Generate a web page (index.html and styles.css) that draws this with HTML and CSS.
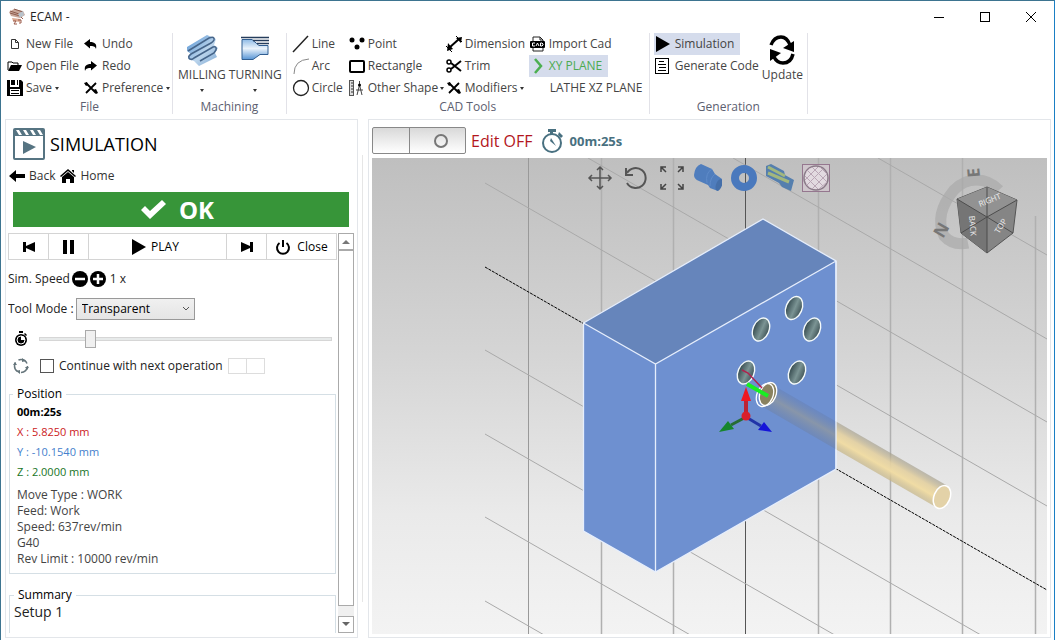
FILE: index.html
```html
<!DOCTYPE html>
<html lang="en">
<head>
<meta charset="utf-8">
<title>ECAM</title>
<link rel="stylesheet" href="styles.css">
</head>
<body>
<div class="window">
  <header class="titlebar">
    <svg class="app-icon" width="18" height="18" viewBox="0 0 18 18"><path d="M1 4l5-3 9 2 2 4-5 3-9-2z" fill="#c9a799"/><path d="M2 3l9 3M2 5l10 3M6 1l9 3" stroke="#8c5a4c" stroke-width="1"/><path d="M10 6l5-3 1 4-4 3z" fill="#b9c3cc"/><path d="M4 10l9 1-1 3-7-1z" fill="#dcaa93"/><path d="M5 13l3 0-2 3h3M10 12l3 0v3h-2M13 9l2 2" fill="none" stroke="#9a5b4a"/></svg>
    <h1 class="app-title">ECAM -</h1>
    <div class="window-controls">
      <button class="win-btn" aria-label="Minimize"><svg width="12" height="12" viewBox="0 0 12 12"><path d="M1 6.500h10" stroke="#000"/></svg></button>
      <button class="win-btn" aria-label="Maximize"><svg width="12" height="12" viewBox="0 0 12 12"><rect x="1.500" y="1.500" width="9" height="9" fill="none" stroke="#000"/></svg></button>
      <button class="win-btn" aria-label="Close window"><svg width="12" height="12" viewBox="0 0 12 12"><path d="M1 1l10 10M11 1L1 11" stroke="#000"/></svg></button>
    </div>
  </header>

  <nav class="ribbon">
    <section class="group">
      <div class="cols file-cols">
        <button class="cmd"><svg width="16" height="16" viewBox="0 0 16 16"><path d="M4.500 3.500h4l3 3v6h-7zM8.500 3.500v3h3" fill="none" stroke="#333"/></svg>New File</button>
        <button class="cmd"><svg width="16" height="16" viewBox="0 0 16 16"><path d="M1 7.500L7 3v3c5 0 7 2 6 7-1-3-3-3-6-3v2.500z"/></svg>Undo</button>
        <button class="cmd"><svg width="16" height="16" viewBox="0 0 16 16"><path d="M1 12V4h4l1 1h5v2" fill="none" stroke="#000"/><path d="M1 13l3-6h11l-3 6z"/></svg>Open File</button>
        <button class="cmd"><svg width="16" height="16" viewBox="0 0 16 16"><path d="M14 7.500L8 3v3c-5 0-7 2-6 7 1-3 3-3 6-3v2.500z"/></svg>Redo</button>
        <button class="cmd"><svg width="16" height="16" viewBox="0 0 16 16"><path d="M0 0h3v7h9V0h2l2 2v14H0zM4 0h4v5H4zM10 0h1v5h-1z"/><path d="M8 0h2v5H8z" fill="#fff"/><path d="M3 9h10v6H3z" fill="#fff"/><path d="M4 10.500h8M4 13.500h8" stroke="#000"/></svg>Save<i class="caret"></i></button>
        <button class="cmd"><svg width="16" height="16" viewBox="0 0 16 16"><path d="M3 3l10 10M13 3L3 13" stroke="#000" stroke-width="1.800"/><path d="M1 3l3-1 1 3-2 1zM10 10l3-1 2 4-2 1z"/></svg>Preference<i class="caret"></i></button>
      </div>
      <h2 class="group-name">File</h2>
    </section>

    <section class="group">
      <div class="big-row">
        <button class="big"><svg width="34" height="34" viewBox="0 0 34 34"><defs><linearGradient id="steel" x1="0" y1="0" x2="1" y2="1"><stop offset="0" stop-color="#4c8dd0"/><stop offset=".55" stop-color="#bcd5ec"/><stop offset="1" stop-color="#7ba6d2"/></linearGradient></defs><path d="M2 14L22 2l9 4-2 6 4 3-3 5 2 4-18 9-5-5-6-2 3-5-4-3z" fill="url(#steel)"/><path d="M3 18L24 5q6-2 5 2-1 2-3 3L6 21q-4 3-1 5 2 1 4-1L28 14q4-1 3 3l-2 3L15 28" fill="none" stroke="#46658a" stroke-width="1.600"/></svg>MILLING<i class="caret"></i></button>
        <button class="big"><svg width="30" height="34" viewBox="0 0 30 34"><defs><linearGradient id="turned" x1="0" y1="0" x2="0" y2="1"><stop offset="0" stop-color="#8fbbe6"/><stop offset=".45" stop-color="#eaf3fb"/><stop offset="1" stop-color="#5795d5"/></linearGradient></defs><path d="M2 6.500h10l7 6h9v9h-8l-7 5H2z" fill="url(#turned)" stroke="#315e91"/><path d="M1 4.500h28M13 7.500h16M17 10.500h12" stroke="#263d5c" stroke-width="1.500"/></svg>TURNING<i class="caret"></i></button>
      </div>
      <h2 class="group-name">Machining</h2>
    </section>

    <section class="group">
      <div class="cols cad-cols">
        <button class="cmd"><svg width="18" height="18" viewBox="0 0 18 18"><path d="M1 17L16 1" stroke="#222" stroke-width="1.500"/></svg>Line</button>
        <button class="cmd"><svg width="18" height="18" viewBox="0 0 18 18"><circle cx="4" cy="5" r="2.500"/><circle cx="14" cy="5" r="2.500"/><circle cx="9" cy="12" r="2.500"/></svg>Point</button>
        <button class="cmd"><svg width="18" height="18" viewBox="0 0 18 18"><path d="M4 13L14 4" stroke="#000" stroke-width="2"/><path d="M3 8l5 6-6 2zM11 3l5 5 1-6z"/><path d="M1 11l6 6M11 1l6 6" stroke="#000"/></svg>Dimension</button>
        <button class="cmd"><svg width="18" height="18" viewBox="0 0 18 18"><path d="M4 7V2h7l3 3v11H4v-3" fill="none" stroke="#222"/><path d="M11 2v3h3" fill="none" stroke="#222"/><rect x="1" y="6" width="15" height="7" rx="1"/><path d="M6 8H3.500v3H6M7 11l1.500-3 1.500 3M11.500 8v3h1.500l1-1V9l-1-1z" fill="none" stroke="#fff"/></svg>Import Cad</button>
        <button class="cmd"><svg width="18" height="18" viewBox="0 0 18 18"><path d="M2 17Q2 3 17 2" fill="none" stroke="#888"/></svg>Arc</button>
        <button class="cmd"><svg width="18" height="18" viewBox="0 0 18 18"><rect x="2" y="4" width="14" height="11" rx="1" fill="none" stroke="#000" stroke-width="2"/></svg>Rectangle</button>
        <button class="cmd"><svg width="18" height="18" viewBox="0 0 18 18"><circle cx="4" cy="5" r="2" fill="none" stroke="#000" stroke-width="1.500"/><circle cx="4" cy="13" r="2" fill="none" stroke="#000" stroke-width="1.500"/><path d="M6 6l10 8M6 12l10-8" stroke="#000" stroke-width="2"/></svg>Trim</button>
        <button class="cmd active plane"><svg width="18" height="18" viewBox="0 0 18 18"><path d="M6 2l6 7-6 7" fill="none" stroke="#4caf50" stroke-width="2.500"/></svg>XY PLANE</button>
        <button class="cmd"><svg width="18" height="18" viewBox="0 0 18 18"><circle cx="9" cy="9" r="7.500" fill="none" stroke="#222" stroke-width="1.300"/></svg>Circle</button>
        <button class="cmd"><svg width="18" height="18" viewBox="0 0 18 18"><rect x="1.500" y="1.500" width="4" height="15" fill="#ddd" stroke="#555"/><path d="M3 4h2M3 7h2M3 10h2M3 13h2" stroke="#333"/><path d="M11.500 2v4M11.500 6L9 16M11.500 6L14 16M8 11h7" fill="none" stroke="#444"/><circle cx="11.500" cy="6" r="1.500"/></svg>Other Shape<i class="caret"></i></button>
        <button class="cmd"><svg width="18" height="18" viewBox="0 0 18 18"><path d="M4 4l10 10M14 4L4 14" stroke="#000" stroke-width="1.800"/><path d="M2 4l3-1 1 3-2 1zM11 11l3-1 2 4-2 1z"/></svg>Modifiers<i class="caret"></i></button>
        <button class="cmd no-icon">LATHE XZ PLANE</button>
      </div>
      <h2 class="group-name">CAD Tools</h2>
    </section>

    <section class="group">
      <div class="gen-row">
        <div class="gen-list">
          <button class="cmd active"><svg width="18" height="18" viewBox="0 0 18 18"><path d="M2 1l14 8-14 8z"/></svg>Simulation</button>
          <button class="cmd"><svg width="18" height="18" viewBox="0 0 18 18"><rect x="1.500" y="1.500" width="13" height="15" fill="none" stroke="#000"/><path d="M5 4.500h5M4 7.500h8M5 10.500h7M4 13.500h8" stroke="#000"/></svg>Generate Code</button>
        </div>
        <button class="big"><svg width="30" height="34" viewBox="0 0 30 34"><path d="M4 12Q7 4 14 4q6 0 9 8" fill="none" stroke="#000" stroke-width="3.500"/><path d="M27 8v11l-11-4zM3 28V16l11 4z"/><path d="M26 21q-2 9-10 9-6 0-9-6" fill="none" stroke="#000" stroke-width="3.500"/></svg>Update</button>
      </div>
      <h2 class="group-name">Generation</h2>
    </section>
  </nav>

  <main class="workspace">
    <aside class="panel side">
      <div class="side-title">
        <svg width="32" height="32" viewBox="0 0 32 32"><rect x="1" y="1" width="30" height="30" rx="1" fill="#fff" stroke="#567482" stroke-width="2"/><path d="M1 1h30v7H1z" fill="#567482"/><path d="M3 2l3 5h3L6 2zM10 2l3 5h3l-3-5zM17 2l3 5h3l-3-5zM24 2l3 5h3l-3-5z" fill="#fff"/><path d="M10 13l13 6-13 7z" fill="#567482"/></svg>
        <h2>SIMULATION</h2>
      </div>
      <div class="crumbs">
        <a href="#back"><svg width="16" height="16" viewBox="0 0 16 16"><path d="M0 8l7-6v4h9v4H7v4z"/></svg>Back</a>
        <a href="#home"><svg width="16" height="16" viewBox="0 0 16 16"><path d="M0 8l8-7 8 7-1 1-7-6-7 6zM2 9l6-5 6 5v6h-4v-4H6v4H2zM12 2h2v3l-2-2z"/></svg>Home</a>
      </div>
      <button class="ok"><svg width="26" height="22" viewBox="0 0 26 22"><path d="M1 11l4-4 5 5L22 1l4 4-16 15z" fill="#fff"/></svg>OK</button>

      <div class="scroller">
        <div class="scroll-body">
          <div class="player">
            <button aria-label="Previous"><svg width="14" height="14" viewBox="0 0 14 14"><path d="M1 2h3v4l9-4v10L4 8v4H1z"/></svg></button>
            <button aria-label="Pause"><svg width="14" height="14" viewBox="0 0 14 14"><path d="M1 0h4v14H1zM8 0h4v14H8z"/></svg></button>
            <button class="play"><svg width="14" height="16" viewBox="0 0 14 16"><path d="M0 0l14 8-14 8z"/></svg>PLAY</button>
            <button aria-label="Next"><svg width="14" height="14" viewBox="0 0 14 14"><path d="M13 2h-3v4L1 2v10l9-4v4h3z"/></svg></button>
            <button class="close"><svg width="16" height="16" viewBox="0 0 16 16"><path d="M4.500 4a6 6 0 1 0 7 0" fill="none" stroke="#000" stroke-width="2"/><path d="M8 1v7" stroke="#000" stroke-width="2"/></svg>Close</button>
          </div>
          <div class="speed">
            <span>Sim. Speed</span>
            <span class="steps">
              <button aria-label="Slower"><svg width="16" height="16" viewBox="0 0 16 16"><circle cx="8" cy="8" r="8"/><path d="M3 8h10" stroke="#fff" stroke-width="2.500"/></svg></button>
              <button aria-label="Faster"><svg width="16" height="16" viewBox="0 0 16 16"><circle cx="8" cy="8" r="8"/><path d="M3 8h10M8 3v10" stroke="#fff" stroke-width="2.500"/></svg></button>
            </span>
            <span>1 x</span>
          </div>
          <div class="mode">
            <label for="tool-mode">Tool Mode :</label>
            <span class="select-box"><select id="tool-mode"><option>Transparent</option></select><svg width="8" height="6" viewBox="0 0 8 6"><path d="M1 1l3 3 3-3" fill="none" stroke="#555"/></svg></span>
          </div>
          <div class="time-row">
            <svg width="14" height="16" viewBox="0 0 14 16"><path d="M5 0h4v2H5zM11 2l2 2-1 1-2-2z"/><circle cx="7" cy="9" r="6"/><circle cx="7" cy="9" r="4" fill="none" stroke="#fff"/><path d="M7 9V5a4 4 0 0 1 4 4z" fill="#fff"/></svg>
            <input type="range" min="0" max="100" value="16" aria-label="Simulation time">
          </div>
          <div class="next-row">
            <svg width="16" height="16" viewBox="0 0 16 16"><circle cx="8" cy="8" r="6.500" fill="none" stroke="#65757b" stroke-width="1.500" stroke-dasharray="10 3.600"/><path d="M9 0l4 3-4 1zM7 16l-4-3 4-1zM0 7l2-3 2 3zM16 9l-2 3-2-3z" fill="#65757b"/></svg>
            <input type="checkbox" id="continue"><label for="continue">Continue with next operation</label>
            <span class="mini-toggle"><span></span><span></span></span>
          </div>
          <fieldset class="position">
            <legend>Position</legend>
            <div class="axes">
              <p class="time">00m:25s</p>
              <p class="x">X : 5.8250 mm</p>
              <p class="y">Y : -10.1540 mm</p>
              <p class="z">Z : 2.0000 mm</p>
            </div>
            <p>Move Type : WORK</p>
            <p>Feed: Work</p>
            <p>Speed: 637rev/min</p>
            <p>G40</p>
            <p>Rev Limit : 10000 rev/min</p>
          </fieldset>
          <fieldset class="summary">
            <legend>Summary</legend>
            <p>Setup 1</p>
          </fieldset>
        </div>
        <div class="scrollbar">
          <button aria-label="Scroll up"><svg width="8" height="5" viewBox="0 0 8 5"><path d="M0 5l4-4 4 4z" fill="#777"/></svg></button>
          <div class="thumb"></div>
          <button aria-label="Scroll down"><svg width="8" height="5" viewBox="0 0 8 5"><path d="M0 0l4 4 4-4z" fill="#666"/></svg></button>
        </div>
      </div>
    </aside>
    <div class="splitter"></div>
    <section class="panel view">
      <div class="view-bar">
        <button class="switch" aria-label="Edit mode"><span></span><span><svg width="16" height="16" viewBox="0 0 16 16"><circle cx="8" cy="8" r="6" fill="none" stroke="#777" stroke-width="2"/></svg></span></button>
        <span class="edit-state">Edit OFF</span>
        <svg width="22" height="26" viewBox="0 0 22 26"><circle cx="11" cy="15" r="9" fill="none" stroke="#487080" stroke-width="2"/><path d="M7 1h8v3H7zM9 4h3v2H9zM18 4l4 4-2 2-3-3z" fill="#487080"/><path d="M10 10l5 8-6-5z" fill="#487080"/></svg>
        <strong class="clock">00m:25s</strong>
      </div>
      <div class="stage">
        <svg class="scene" viewBox="372 158 675 476" preserveAspectRatio="xMidYMid slice">
          <defs>
            <linearGradient id="sky" x1="0" y1="0" x2="0" y2="1"><stop offset="0" stop-color="#bfbfbf"/><stop offset=".4" stop-color="#d4d4d4"/><stop offset=".75" stop-color="#eaeaea"/><stop offset="1" stop-color="#f3f3f3"/></linearGradient>
            <linearGradient id="rod" gradientUnits="userSpaceOnUse" x1="0" y1="-12" x2="0" y2="12"><stop offset="0" stop-color="#a59f8c" stop-opacity=".65"/><stop offset=".35" stop-color="#e3d0a0" stop-opacity=".9"/><stop offset=".65" stop-color="#f0dca5"/><stop offset="1" stop-color="#c5b587" stop-opacity=".7"/></linearGradient>
            <linearGradient id="rod-in" gradientUnits="userSpaceOnUse" x1="0" y1="-12" x2="0" y2="12"><stop offset="0" stop-color="#6781b4" stop-opacity=".6"/><stop offset=".5" stop-color="#8d97a3"/><stop offset="1" stop-color="#6e84ad" stop-opacity=".7"/></linearGradient>
            <linearGradient id="bore"><stop offset="0" stop-color="#34494d"/><stop offset=".55" stop-color="#7b9494"/><stop offset="1" stop-color="#405457"/></linearGradient>
          </defs>
          <rect x="372" y="158" width="675" height="476" fill="url(#sky)"/>
          <path d="M601.500 158v476M673.500 158v476M818.500 158v476M890.500 158v476M962.500 158v476M1035.500 216v418" stroke="#b0b0b0" stroke-width="1.500"/>
          <path d="M528.500 158v476" stroke="#999"/>
          <path d="M745.500 158v476" stroke="#555"/>
          <path d="M485 183l562 323M485 350l562 323M485 434l562 323M485 517l562 323M485 601l562 323M588 158l459 264M733 158l314 181M878 158l169 97" stroke="#a9a9a9" stroke-width="1"/>
          <path d="M485 267l562 323" stroke="#000" stroke-dasharray="3 1"/>
          <path d="M583.500 323L763 219l73 42v208L655.500 572l-72-41z" fill="#6e90d0"/>
          <path d="M583.500 323L763 219l73 42-180.500 103z" fill="#6685bb"/>
          <path d="M583.500 323L763 219l73 42v208L655.500 572l-72-41zM583.500 323l72 41L836 261M655.500 364v208" fill="none" stroke="#e6eefc" stroke-width="1.300"/>
          <g fill="url(#bore)" stroke="#f4fafa" stroke-width="1.400">
            <ellipse cx="761" cy="329.500" rx="8" ry="12" transform="rotate(23 761 329.500)"/>
            <ellipse cx="794" cy="308" rx="8" ry="12" transform="rotate(23 794 308)"/>
            <ellipse cx="812" cy="329.500" rx="8" ry="12" transform="rotate(23 812 329.500)"/>
            <ellipse cx="797" cy="372.500" rx="8" ry="12" transform="rotate(23 797 372.500)"/>
            <ellipse cx="746" cy="372.500" rx="8" ry="12" transform="rotate(23 746 372.500)"/>
          </g>
          <g transform="translate(766 395) rotate(30)"><path d="M0-12H74L88 12H0z" fill="url(#rod-in)" opacity=".85"/><path d="M74-12H203V12H88z" fill="url(#rod)"/></g>
          <path d="M836 261v208" stroke="#e6eefc" stroke-width="1.300"/>
          <ellipse cx="942" cy="497" rx="8" ry="12" transform="rotate(23 942 497)" fill="#e3d2a8" stroke="#fff" stroke-width="1.500"/>
          <ellipse cx="768" cy="394" rx="8" ry="12" transform="rotate(23 768 394)" fill="#8a8260" stroke="#fff" stroke-width="1.300"/>
          <ellipse cx="765" cy="395" rx="8" ry="12" transform="rotate(23 765 395)" fill="none" stroke="#fff" stroke-width="1.300"/>
          <path d="M742 370l6 3 14 15" fill="none" stroke="#b0234d" stroke-width="1.500"/>
          <path d="M747 384l21 12" stroke="#19ee22" stroke-width="4"/>
          <path d="M746 416v-17" stroke="#bc2434" stroke-width="4"/><path d="M741 401l5-14 5 14z" fill="#ef1722"/>
          <path d="M746 417l-15 8" stroke="#266c35" stroke-width="3"/><path d="M719 432l9-11 6 8z" fill="#16852c"/>
          <path d="M746 417l15 9" stroke="#2133a7" stroke-width="3"/><path d="M772 432l-8-10-6 8z" fill="#1515d9"/>
          <circle cx="746" cy="416" r="4.500" fill="#d9202c"/>
          <path d="M999 190A32 35 0 0 0 954 190Q934 214 944 236 953 246 968 243" fill="none" stroke="#aaa" stroke-width="11" opacity=".7"/>
          <path d="M957 199l30-12 30 13-4 33-26 20-26-20z" fill="#858585" stroke="#555"/>
          <path d="M957 199l30 18v36l-26-20z" fill="#757575"/><path d="M957 199l30 18 30-17-30-13z" fill="#929292"/>
          <path d="M957 199l30 18 30-17M987 217v36M987 187v30l-26 16M987 217l26 16" fill="none" stroke="#4d4d4d"/>
          <g class="cube-text"><text x="980" y="207" transform="rotate(-22 980 207)">RIGHT</text><text x="969" y="216" transform="rotate(85 969 216)">BACK</text><text x="999" y="234" transform="rotate(-58 999 234)">TOP</text></g>
          <g class="compass"><text x="980" y="177" transform="rotate(-95 980 177)">E</text><text x="943" y="239" transform="rotate(-60 943 239)">N</text></g>
        </svg>
        <div class="view-tools">
          <button aria-label="Pan"><svg width="26" height="26" viewBox="0 0 26 26"><path d="M13 2v22M2 13h22M10 5l3-3 3 3M10 21l3 3 3-3M5 10l-3 3 3 3M21 10l3 3-3 3" fill="none" stroke="#555" stroke-width="1.500"/></svg></button>
          <button aria-label="Rotate"><svg width="26" height="26" viewBox="0 0 26 26"><path d="M4 8a10 10 0 1 1 0 10" fill="none" stroke="#555" stroke-width="2"/><path d="M3 3v7h7" fill="none" stroke="#555" stroke-width="2"/></svg></button>
          <button aria-label="Zoom to fit"><svg width="26" height="26" viewBox="0 0 26 26"><path d="M2 7V2h5M2 2l5 5M19 2h5v5M24 2l-5 5M2 19v5h5M2 24l5-5M24 19v5h-5M24 24l-5-5" fill="none" stroke="#444" stroke-width="1.500"/></svg></button>
          <button aria-label="Solid view"><svg width="28" height="28" viewBox="0 0 28 28"><path d="M0 11Q1 2 7 0l11 5 3 5 7 5q1 6-4 12l-8-3-2-3-9-4Q0 15 0 11z" fill="#4f7dbd"/><path d="M18 5q-7 4-5 14M21 10q-5 4-5 12" fill="none" stroke="#5f8bc9"/><ellipse cx="25" cy="21" rx="3" ry="6" transform="rotate(20 25 21)" fill="#456fa9"/></svg></button>
          <button aria-label="Ring view"><svg width="26" height="26" viewBox="0 0 26 26"><circle cx="13" cy="13" r="9" fill="none" stroke="#4a79bd" stroke-width="8"/></svg></button>
          <button aria-label="Section view"><svg width="28" height="28" viewBox="0 0 28 28"><path d="M0 2l5-2 13 7 1 4 9 5-3 11-9-4-3-4L0 12z" fill="#557fae"/><path d="M2 3l17 9M2 9l21 9" fill="none" stroke="#a2b77d" stroke-width="3"/></svg></button>
          <button aria-label="Wireframe view"><svg width="28" height="28" viewBox="0 0 28 28"><rect x=".5" y=".5" width="27" height="27" fill="#cfc6cc" stroke="#95778f"/><circle cx="14" cy="14" r="12" fill="#e2dae0" stroke="#8a7b88" stroke-width="1.500"/><path d="M4 8l4-4M3 16L16 3M5 21L21 5M10 25l15-15M17 25l8-7M18 3l7 7M10 3l15 15M5 6l17 17M3 12l13 13M4 20l4 4" stroke="#b9a6b5"/></svg></button>
        </div>
      </div>
    </section>
  </main>
</div>
</body>
</html>
```

FILE: styles.css
```css
* { box-sizing: border-box; }
body, h1, h2, p, fieldset { margin: 0; padding: 0; }
body {
  font-family: "Open Sans", "Noto Sans", sans-serif;
  font-size: 12px;
  line-height: 16px;
  color: #222;
  background: #fff;
}
svg { flex: none; display: block; }
button {
  font: inherit;
  color: inherit;
  background: none;
  border: 0;
  padding: 0;
  display: flex;
  align-items: center;
  white-space: nowrap;
}
.window {
  height: 100vh;
  display: flex;
  flex-direction: column;
  border: 1px solid #1a7fc4;
  border-top-color: #3d7490;
  border-left-color: #3d7490;
  border-bottom: 0;
}

.titlebar { display: flex; align-items: center; height: 32px; padding-left: 7px; gap: 4px; flex: none; }
.app-title { font-size: 12px; font-weight: 400; flex: 1; }
.window-controls { display: flex; }
.win-btn { width: 46px; height: 28px; justify-content: center; }

.ribbon { display: flex; flex: none; height: 85px; padding-left: 6px; }
.group {
  display: flex;
  flex-direction: column;
  justify-content: space-between;
  height: 81px;
  border-right: 1px solid #e2e2e8;
}
.group-name { font-size: 12px; font-weight: 400; color: #5c6070; text-align: center; line-height: 14px; }
.cols { display: grid; grid-auto-rows: 22px; color: #444; }
.file-cols { grid-template-columns: 76px 89px; }
.cad-cols { grid-template-columns: 56px 97px 84px 120px; padding-left: 5px; }
.cmd { gap: 3px; height: 22px; justify-self: start; color: #444; }
.cad-cols .cmd { gap: 2px; }
.caret {
  width: 0;
  height: 0;
  border: 2px solid transparent;
  border-top: 3px solid #333;
  border-bottom: 0;
}
.active { background: #d5dcec; }
.cad-cols .plane { color: #4cab50; padding-right: 6px; }
.no-icon { padding-left: 21px; }
.big-row { display: flex; gap: 3px; padding: 0 4px 0 5px; }
.big { flex-direction: column; color: #444; }
.big .caret { margin-top: 6px; }
.gen-row { display: flex; gap: 3px; padding: 0 4px 0 4px; }
.gen-list .active { padding-right: 6px; }

.workspace { display: flex; flex: 1; min-height: 0; padding: 1px 3px 2px 4px; }
.panel { border: 1px solid #e3e6ea; display: flex; flex-direction: column; min-width: 0; }
.side { flex: 0 0 353px; padding: 8px 3px 4px 2px; }
.side-title { display: flex; align-items: center; gap: 5px; padding-left: 5px; color: #000; }
.side-title h2 { font-size: 18px; line-height: 24px; font-weight: 400; }
.crumbs { display: flex; gap: 5px; height: 32px; align-items: center; padding-left: 1px; }
.crumbs a { display: flex; align-items: center; gap: 4px; color: #333; text-decoration: none; }
.ok {
  flex: none;
  height: 35px;
  margin: 0 5px 6px;
  padding-right: 8px;
  justify-content: center;
  gap: 13px;
  background: #379539;
  color: #fff;
  font-size: 24px;
  font-weight: 700;
}
.scroller { display: flex; flex: 1; min-height: 0; }
.scroll-body { flex: 1; overflow: hidden; min-width: 0; color: #222; }
.player { display: flex; height: 27px; border: 1px solid #d4d4d4; margin-bottom: 9px; color: #000; }
.player button { justify-content: center; flex: 0 0 40px; border-right: 1px solid #d4d4d4; }
.player .play { flex: 1; gap: 5px; padding-right: 4px; }
.player .close { flex: 0 0 69px; gap: 6px; border-right: 0; }
.speed, .mode { display: flex; align-items: center; gap: 2px; height: 20px; }
.steps { display: flex; gap: 2px; margin-right: 2px; }
.mode { height: 22px; margin-top: 9px; }
.select-box { display: grid; align-items: center; }
.select-box select, .select-box svg { grid-area: 1 / 1; }
.select-box svg { justify-self: end; margin-right: 5px; pointer-events: none; }
.select-box select {
  appearance: none;
  width: 119px;
  height: 22px;
  padding: 0 5px;
  font: inherit;
  color: #000;
  border: 1px solid #999;
  border-radius: 0;
  background: linear-gradient(#f0f0f0, #e5e5e5);
}
.time-row { display: flex; align-items: center; gap: 11px; height: 22px; margin-top: 8px; padding: 0 5px 0 6px; }
.time-row input { appearance: none; flex: 1; min-width: 0; height: 18px; margin: 0; background: none; }
.time-row input::-webkit-slider-runnable-track { height: 4px; background: #e7eaea; border: 1px solid #d6d6d6; }
.time-row input::-webkit-slider-thumb { appearance: none; width: 11px; height: 18px; margin-top: -8px; background: #f0f0f0; border: 1px solid #aaa; }
.next-row { display: flex; align-items: center; gap: 5px; height: 20px; margin-top: 6px; padding-left: 5px; }
.next-row input { appearance: none; width: 14px; height: 14px; margin: 0 0 0 6px; border: 1px solid #555; background: #fff; }
.mini-toggle { display: grid; grid-template-columns: 1fr 1fr; width: 37px; height: 16px; border: 1px solid #ddd; }
.mini-toggle span + span { border-left: 1px solid #ddd; }
fieldset { border: 1px solid #d5dfe5; margin: 0 1px; min-width: 0; }
legend { padding: 0 4px; color: #000; }
.position { margin-top: 10px; padding: 0 7px 6px; color: #444; }
.position legend { margin-left: -4px; }
.axes { line-height: 20px; font-size: 11px; padding-bottom: 5px; }
.time { font-weight: 700; color: #000; }
.position .x { color: #cc1a22; }
.position .y { color: #4480cc; }
.position .z { color: #177526; }
.summary { margin-top: 13px; padding: 0 4px; height: 70px; }
.summary p { font-size: 14px; line-height: 18px; }
.scrollbar { flex: 0 0 16px; display: flex; flex-direction: column; background: #f0f0f0; margin-left: 1px; }
.scrollbar button { height: 17px; border: 1px solid #aaa; background: #fff; justify-content: center; flex: none; }
.thumb { flex: 1; border: 1px solid #aaa; background: #fff; margin-bottom: 10px; }
.splitter { flex: 0 0 5px; margin: 36px 5px 36px 0; border-right: 1px solid #e6e6e6; }

.view { flex: 1; padding: 0 3px 3px; }
.view-bar { display: flex; align-items: center; gap: 5px; height: 38px; flex: none; padding-top: 3px; }
.switch {
  width: 94px;
  height: 27px;
  align-items: stretch;
  border: 1px solid #888;
  border-radius: 2px;
  background: linear-gradient(#d9d9d9, #fff);
}
.switch span { display: flex; align-items: center; justify-content: center; flex: 4; }
.switch span:first-child { flex: 3; border-right: 1px solid #888; }
.switch span + span { padding-left: 6px; }
.edit-state { font-size: 16px; line-height: 20px; color: #b3161d; margin-right: 3px; }
.clock { font-size: 13px; color: #487080; margin-left: 2px; }
.stage { position: relative; flex: 1; min-height: 0; overflow: hidden; }
.scene { width: 100%; height: 100%; }
.view-tools { position: absolute; top: 2px; left: 0; right: 4px; display: flex; justify-content: center; }
.view-tools button { width: 36px; height: 36px; justify-content: center; }
.cube-text { font-size: 8px; fill: #eee; text-anchor: start; }
.compass { font-size: 17px; font-weight: 700; fill: #777; }
```
